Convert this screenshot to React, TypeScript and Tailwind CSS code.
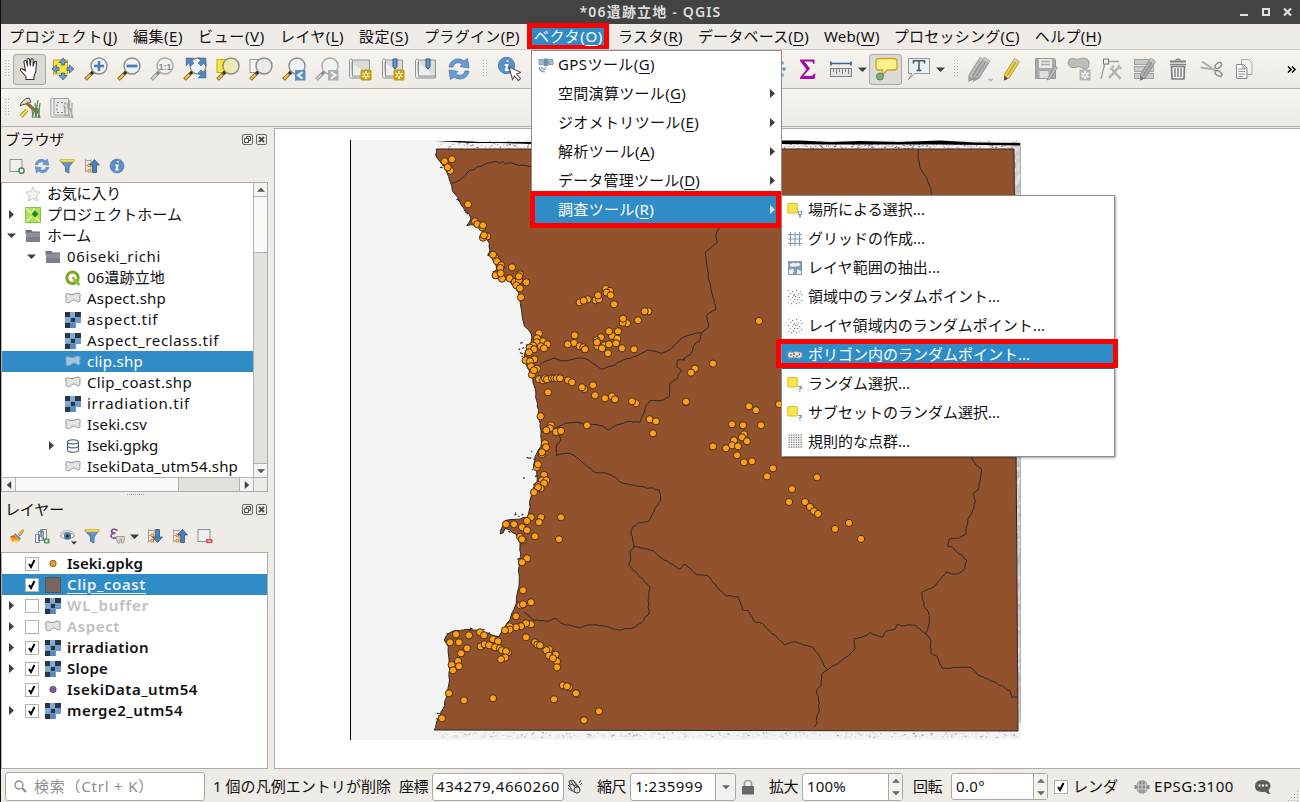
import React, { useLayoutEffect, useRef } from "react";

/* ---------- text ---------- */

/** Single line of text whose letter spacing is computed so that it fills `w` pixels. */
function Fit({ w, className = "", children }: { w: number; className?: string; children: React.ReactNode }) {
  const ref = useRef<HTMLSpanElement>(null);
  useLayoutEffect(() => {
    const el = ref.current;
    if (!el) return;
    el.style.letterSpacing = "0px";
    const natural = el.getBoundingClientRect().width;
    const count = (el.textContent || "").length || 1;
    el.style.letterSpacing = `${(w - natural) / count}px`;
  }, [w]);
  return (
    <span ref={ref} className={`inline-block shrink-0 whitespace-pre ${className}`}>
      {children}
    </span>
  );
}

function Mnemonic({ label, k }: { label: string; k: string }) {
  return (
    <>
      {label}(<span className="underline decoration-1 underline-offset-[3px]">{k}</span>)
    </>
  );
}

/* ---------- shared icon parts ---------- */

function Svg({ s = 24, vb = "0 0 24 24", children }: { s?: number; vb?: string; children: React.ReactNode }) {
  return (
    <svg width={s} height={s} viewBox={vb} fill="none" className="block shrink-0">
      {children}
    </svg>
  );
}

function Lens({ grey = false, fill = "#edf1f0" }: { grey?: boolean; fill?: string }) {
  return (
    <>
      <path d="M1.5 22.5 8.5 15.5" stroke={grey ? "#8d8d8d" : "#6b5a2a"} strokeWidth="3.6" />
      <path d="M2 22 6.5 17.5" stroke={grey ? "#d0d0d0" : "#f8c332"} strokeWidth="2.2" />
      <circle cx="8.8" cy="15.2" r="1.8" fill={grey ? "#888" : "#222"} />
      <circle cx="15" cy="9" r="8" fill={fill} fillOpacity=".88" stroke={grey ? "#a8a8a8" : "#858d8d"} strokeWidth="1.4" />
    </>
  );
}

const Hand = () => (
  <Svg>
    <path
      d="M8 22.500 8 19.5 3 14C1.6 12.4 3 11 4.6 12L7.5 14 6 5C5.8 3.2 8 3 8.4 4.6L9.6 9 9.2 2.8C9.2 1 11.4 1 11.6 2.7L12.3 8.8 12.9 2.7C13.2 1.2 15.2 1.4 15.2 3.1L15 9.3 16.4 5C17 3.6 18.8 4.2 18.5 5.8L17.7 15 16 19V22.500Z"
      fill="#fff"
      stroke="#333"
      strokeWidth="1.1"
      strokeLinejoin="round"
    />
  </Svg>
);
const Pan = () => (
  <Svg>
    <rect x="2.5" y="3" width="14" height="14" fill="#f8e23c" stroke="#c9a915" />
    <g fill="#6e9bd0" stroke="#36608f" strokeWidth=".8">
      <path d="M12 1 16 5.5H13.5V8H10.500V5.500H8Z" />
      <path d="M12 23 16 18.500H13.500V16H10.500V18.500H8Z" />
      <path d="M1 12 5.500 8V10.500H8V13.500H5.500V16Z" />
      <path d="M23 12 18.500 8V10.500H16V13.500H18.500V16Z" />
    </g>
  </Svg>
);
const ZoomIn = () => (
  <Svg>
    <Lens />
    <path d="M15 4V14M10 9H20" stroke="#4a7fb5" strokeWidth="2.600" />
  </Svg>
);
const ZoomOut = () => (
  <Svg>
    <Lens />
    <path d="M9.500 9H20.500" stroke="#4a7fb5" strokeWidth="2.800" />
  </Svg>
);
const ZoomOne = () => (
  <Svg>
    <Lens grey />
    <text x="15" y="12.500" textAnchor="middle" fontSize="9" fontWeight="700" fontFamily="Liberation Sans, sans-serif" fill="#8a8a8a">
      1:1
    </text>
  </Svg>
);
const ZoomFull = () => (
  <Svg>
    <Lens />
    <g fill="#5786bb" stroke="#36608f" strokeWidth=".5">
      <path d="M3 1H11L8.500 3.500 11 6 8 9 5.500 6.500 3 9Z" />
      <path d="M23 1V9L20.500 6.500 18 9 15 6 17.500 3.500 15 1Z" />
      <path d="M23 21V13L20.500 15.500 18 13 15 16 17.500 18.500 15 21Z" />
    </g>
  </Svg>
);
const ZoomSel = () => (
  <Svg>
    <rect x="1" y="2.500" width="13" height="13" fill="#f8e23c" stroke="#c9a915" />
    <Lens fill="#ece9b4" />
  </Svg>
);
const ZoomLayer = () => (
  <Svg>
    <rect x="1" y="2.500" width="13" height="13" fill="#f4f4f2" stroke="#9a9a9a" />
    <Lens fill="#e6e9e8" />
  </Svg>
);
const ZoomLast = () => (
  <Svg>
    <Lens />
    <rect x="13" y="13" width="10.500" height="10.500" fill="#5d8dc4" />
    <path d="M20.500 15 16 18.200 20.500 21.500" stroke="#fff" strokeWidth="1.800" />
  </Svg>
);
const ZoomNext = () => (
  <Svg>
    <Lens grey />
    <rect x="13" y="13" width="10.500" height="10.500" fill="#aeb0b0" />
    <path d="M16 15 20.500 18.200 16 21.500" stroke="#fff" strokeWidth="1.800" />
  </Svg>
);
function Scroll({ ribbon = false, badge = false }: { ribbon?: boolean; badge?: boolean }) {
  return (
    <Svg>
      <path d="M4 3H21.500V21H4Z" fill="#dadcdc" stroke="#909494" />
      <path d="M1.500 3.500C1.500 1.500 4.500 1.500 4.500 3.500V19H21M1.500 3.500V19.500C1.500 21 3 21.300 4.500 21" fill="#edeeee" stroke="#909494" />
      {ribbon && <path d="M12 2H16V9.500L14 12 12 9.500Z" fill="#6694cc" stroke="#2d5485" />}
      {badge && (
        <>
          <rect x="12.500" y="12.500" width="11" height="11" rx="1.500" fill="#c79f0d" />
          <path d="M18 14V22M14.500 16 21.500 20M21.500 16 14.500 20" stroke="#fff" strokeWidth="1.400" />
          <circle cx="18" cy="18" r="1.200" fill="#c79f0d" />
        </>
      )}
    </Svg>
  );
}
const Refresh = ({ s = 24 }: { s?: number }) => (
  <Svg s={s}>
    <g fill="#6b9bd1" stroke="#4478b0" strokeWidth=".8" strokeLinejoin="round">
      <path d="M2 10C3 3 11-.5 17 4L20.500 1.500 22 11 13 9.500 15.500 7C11 4.500 7 6 6 10Z" />
      <path d="M22 14C21 21 13 24.500 7 20L3.500 22.500 2 13 11 14.500 8.500 17C13 19.500 17 18 18 14Z" />
    </g>
  </Svg>
);
const Info = ({ s = 18 }: { s?: number }) => (
  <Svg s={s}>
    <circle cx="12" cy="12" r="10.500" fill="#5b8fc7" stroke="#4478b0" />
    <path d="M13.500 5.500H13.600M10.500 11H13L11 17.500H13.500" stroke="#fff" strokeWidth="2.600" strokeLinecap="round" />
  </Svg>
);
const Identify = () => (
  <Svg>
    <circle cx="9.500" cy="8.500" r="8.200" fill="#5b8fc7" stroke="#4e7fb5" />
    <path d="M10.500 4H10.600M8.500 8H10.300L9 13H10.800" stroke="#fff" strokeWidth="2" strokeLinecap="round" />
    <path d="M12 10 24 15.500 19.500 17 23.500 21.500 21.500 23.500 17.500 19 15.500 22.500Z" fill="#fff" stroke="#555" strokeWidth="1.100" />
  </Svg>
);
const Sigma = () => (
  <Svg>
    <path
      d="M4 2.500H18.500V7H17.500C17 5 16 4.500 14 4.500H8.500L14 11.500 7.500 19H14.500C16.500 19 17.500 18 18 16.500H19.500L18.500 22H4V20.500L10.500 12.500 4 4Z"
      fill="#a50ca5"
    />
  </Svg>
);
const Ruler = () => (
  <Svg s={24}>
    <path d="M1.500 6.500H22.500M2 4.500V8.500M22 4.500V8.500" stroke="#3c648c" strokeWidth="1.700" />
    <rect x="1.500" y="11.500" width="21" height="8" fill="#e2e2e2" stroke="#828282" />
    <path d="M4.500 12V15M7.500 12V17M10.500 12V15M13.500 12V17M16.500 12V15M19.500 12V17" stroke="#777" strokeWidth=".9" />
  </Svg>
);
const MapTip = () => (
  <Svg>
    <path d="M5 1.500H20Q23 1.500 23 4.500V10Q23 13 20 13H13L8.500 18V13H5Q2 13 2 10V4.500Q2 1.500 5 1.500Z" fill="#fcf08e" stroke="#c9a91c" strokeWidth="1.300" />
    <circle cx="6" cy="19.500" r="3.500" fill="#7fae7d" stroke="#55805a" />
  </Svg>
);
const TextNote = () => (
  <Svg>
    <path d="M1.500 1.500H22.500V16.500H8L1.500 22.500 5 16.500H1.500Z" fill="#e7f1f8" stroke="#8f9aa3" />
    <path d="M6.500 6.500V3.800H17.500V6.500M12 4V13M9.500 13.500H14.500" stroke="#555" strokeWidth="1.600" />
  </Svg>
);
function Pencil({ body = "#e8d253", dark = "#b39b25", tip = "#555" }) {
  return (
    <>
      <path d="M3.500 17.500 13.500 1.500 18.500 4.500 8.500 20.500 3.500 23Z" fill={body} stroke={dark} strokeWidth="1" />
      <path d="M6.200 18.700 16 3.200" stroke={dark} strokeWidth="1.200" />
      <path d="M12 3.500 13.500 1.500 18.500 4.500 17.200 6.500Z" fill="#c9c9c9" />
      <path d="M3.500 19.500 3.500 23 6.500 21.500Z" fill={tip} stroke={tip} />
    </>
  );
}
const Pencils = () => (
  <Svg s={26}>
    <g transform="translate(-1.500 0)"><Pencil body="#bcbcba" dark="#9d9d9b" tip="#999" /></g>
    <g transform="translate(2.500 0)"><Pencil body="#b4b4b2" dark="#959593" tip="#999" /></g>
    <path d="M19 21H25L22 24Z" fill="#bdbdbd" />
  </Svg>
);
const PencilY = () => (
  <Svg><Pencil /></Svg>
);
const Save = () => (
  <Svg>
    <path d="M1.500 1.500H20L21.500 3V21.500H1.500Z" fill="#a9a9a7" stroke="#999" />
    <rect x="5" y="2" width="13" height="9" fill="#eceae8" />
    <path d="M7 4.500H16M7 7.500H16" stroke="#a9a9a7" strokeWidth="1.300" />
    <rect x="5.500" y="14" width="9" height="7" fill="#deddda" />
    <path d="M13 23 21 9 23.500 10.500 16 22Z" fill="#c0c0be" stroke="#858583" strokeWidth=".7" />
  </Svg>
);
const AddPoly = () => (
  <Svg>
    <path d="M2 3C5-.5 8 3 12 2 16 .5 22 .5 22 6 22 12 19 13 16 11.500 14 10 12 9 8 10.500 3 12-.5 7 2 3Z" fill="#bdbdbb" stroke="#989896" />
    <rect x="12.500" y="12.500" width="11" height="11" fill="#b6b6b4" />
    <path d="M18 14V22M14.500 16 21.500 20M21.500 16 14.500 20" stroke="#fff" strokeWidth="1.500" />
    <circle cx="18" cy="18" r="1.200" fill="#b6b6b4" />
  </Svg>
);
const Vertex = () => (
  <Svg>
    <path d="M1 22 5 6M8 4.500H19" stroke="#a2a2a0" strokeWidth="1.300" />
    <rect x="3.500" y="2" width="5" height="5" fill="#eee" stroke="#777" />
    <path d="M11 11 20.500 22M19 10 9 21" stroke="#b2b2b0" strokeWidth="2.400" />
    <path d="M10 12.500 14 8.500M18 8 21.500 12" stroke="#b8b8b6" strokeWidth="2" />
  </Svg>
);
const MultiEdit = () => (
  <Svg>
    <g fill="#c9c9c7" stroke="#a2a2a0">
      <rect x="1.500" y="2.500" width="19" height="5" />
      <rect x="1.500" y="9.500" width="19" height="5" />
      <rect x="1.500" y="16.500" width="19" height="5" />
    </g>
    <g transform="translate(4 0)"><Pencil body="#b0b0ae" dark="#8c8c8a" tip="#777" /></g>
  </Svg>
);
const Trash = () => (
  <Svg>
    <path d="M4 4.500H20" stroke="#858583" strokeWidth="2.200" />
    <path d="M9.500 3.500Q12 .5 14.500 3.500M4 7.500H20" stroke="#858583" strokeWidth="1.300" />
    <path d="M5.500 9.500H18.500L18 22H6Z" fill="#f0efed" stroke="#7d7d7b" strokeWidth="1.700" />
    <path d="M9 11V20M12 11V20M15 11V20" stroke="#8a8a88" strokeWidth="1.500" />
  </Svg>
);
const Cut = () => (
  <Svg>
    <path d="M1.500 10.500 16 12.500M3 4.500 17 14" stroke="#b0b0ae" strokeWidth="2" />
    <ellipse cx="19.300" cy="8.500" rx="3.800" ry="2.300" transform="rotate(-42 19.300 8.500)" stroke="#8d8d8b" strokeWidth="1.500" />
    <ellipse cx="19.500" cy="16.500" rx="3.800" ry="2.300" transform="rotate(32 19.500 16.500)" stroke="#8d8d8b" strokeWidth="1.500" />
  </Svg>
);
const Copy = () => (
  <Svg>
    <path d="M9.500 2.500H16.500L20 6V17.500H9.500Z" fill="#f2f1ef" stroke="#a9a9a7" />
    <path d="M4.500 7.500H11.500L15 11V21.500H4.500Z" fill="#f7f6f4" stroke="#8a8a88" />
    <path d="M6.500 12H13M6.500 14.500H13M6.500 17H13M6.500 19.500H11M11 8V11H15" stroke="#8a8a88" strokeWidth=".9" />
  </Svg>
);
const Grass = () => (
  <Svg>
    <path d="M2 10Q4 3 11 2L13 6 8 8Q5 8 2 10Z" fill="#d8dcd8" stroke="#555" />
    <path d="M8.500 7 20 17" stroke="#a5651c" strokeWidth="3" />
    <path d="M3 20.500 9 14" stroke="#8d8a21" strokeWidth="4" />
    <path d="M3 20.500 9 14" stroke="#ece33c" strokeWidth="2.400" />
    <path d="M15 22 13.500 9M17 22 20 4M19 22 17 7M20.500 22 22 7M14 21 18 11M22 22 19.500 12" stroke="#4f8756" strokeWidth="1.200" />
  </Svg>
);
const GrassGrey = () => (
  <Svg>
    <path d="M4 2.500H18.500V19.500H4Z" fill="#e9e7e4" stroke="#a3a3a1" />
    <path d="M.8 3.500C.8 1.500 4 1.500 4 3.500V19H17M.8 3.500V19.500C.8 21 2 21 4 21H15" stroke="#a3a3a1" fill="#efedea" />
    <path d="M7 6.500H15V16.500H7Z" stroke="#777" strokeDasharray="2 2" />
    <path d="M16 22 14 9M18 22 20 4M20 22 17 7M21.500 22 22 7M23 22 20 12" stroke="#a3a3a1" strokeWidth="1.200" />
  </Svg>
);

/* small icons, 16px grid */
const S16 = ({ s = 16, children }: { s?: number; children: React.ReactNode }) => <Svg s={s} vb="0 0 16 16">{children}</Svg>;
const Star = () => (
  <S16>
    <path d="M8 .8 10.200 5.600 15.300 6.200 11.500 9.800 12.500 15 8 12.400 3.500 15 4.500 9.800 .7 6.200 5.800 5.600Z" fill="#f3f5ee" stroke="#bfc4b7" strokeWidth=".9" />
  </S16>
);
const Home = () => (
  <S16>
    <rect x=".5" y=".5" width="15" height="15" fill="#b3e253" stroke="#7fc243" />
    <path d="M1 1 15 15M1 15 7 9M9 1 7 6" stroke="#e3f5ae" strokeWidth="1.200" />
    <path d="M10 3.500 13.500 7 10 10.500 6.500 7Z" fill="#1c8a1c" />
  </S16>
);
const Folder = () => (
  <S16>
    <path d="M.5 2H6.500L7.500 3.500H15V6H.5Z" fill="#6a6f7a" />
    <path d="M1 4.500H15V14H1Z" fill="#8d919c" />
    <path d="M1 9H15V14H1Z" fill="#7b808c" />
  </S16>
);
const QLogo = () => (
  <S16>
    <circle cx="7.500" cy="7.800" r="5.700" stroke="#76a82a" strokeWidth="3" />
    <path d="M8.500 9 14.500 15" stroke="#8ec13a" strokeWidth="3" />
    <path d="M7 7H10L8 10Z" fill="#ee7913" />
  </S16>
);
const polyShape = "M1 3.500C2 1.500 4 3.500 7 3.500 10 3.500 12 1 14.500 2.500 16 3.500 14.500 5.500 14.800 7.500 15.500 10.500 14 11.500 12 10.500 10 8.500 8 8.500 6 10.500 4 12.500 .5 12 1 9.500 1.500 7 .3 5.500 1 3.500Z";
const Poly = () => (
  <S16>
    <path d={polyShape} fill="#e3e3e3" stroke="#8f8f8f" strokeWidth="1" />
  </S16>
);
const PolySel = () => (
  <S16>
    <path d={polyShape} fill="#a3c6dc" stroke="#6f9fc0" strokeWidth=".9" />
  </S16>
);
const Raster = () => (
  <svg width="16" height="16" viewBox="0 0 16 16" shapeRendering="crispEdges" className="block shrink-0">
    <rect width="16" height="16" fill="#729bc9" />
    <path d="M0 0H6V5H0ZM10 0H16V5H10ZM6 6H10V10H6ZM0 11H5V16H0Z" fill="#26374c" />
    <path d="M5 0H10V5H5ZM0 5H5V10H0Z" fill="#88aad1" />
    <path d="M5 11H10V16H5Z" fill="#5b86ba" />
    <path d="M11 11H16V16H11Z" fill="#fff" />
  </svg>
);
const Db = () => (
  <S16>
    <path d="M2.500 4C2.500 1 13.500 1 13.500 4V12C13.500 15 2.500 15 2.500 12ZM2.500 4C2.500 6.500 13.500 6.500 13.500 4M2.500 8C2.500 10.500 13.500 10.500 13.500 8" fill="#f6f8fa" stroke="#44617f" strokeWidth="1.100" />
  </S16>
);
const Dot = ({ c }: { c: string }) => (
  <S16>
    <circle cx="8" cy="7.500" r="3.200" fill={c} stroke="#555" strokeWidth=".8" />
  </S16>
);
const Swatch = () => <div className="size-4 shrink-0 border border-[#4b5b66] bg-[#78665d]" />;
const AddBox = () => (
  <S16>
    <rect x="1" y="1.500" width="12" height="12" fill="#f1efec" stroke="#8a9390" />
    <circle cx="12.500" cy="12.700" r="2.600" fill="#e6efe6" stroke="#4f8a5b" strokeWidth="1.500" />
  </S16>
);
const RemoveBox = () => (
  <S16>
    <rect x="1" y="1.500" width="12" height="12" fill="#f1efec" stroke="#8a9390" />
    <rect x="9" y="11" width="6.500" height="4" rx="1" fill="#e3403f" />
    <path d="M10.500 13H14" stroke="#fff" />
  </S16>
);
const Filter = () => (
  <S16>
    <path d="M1 2.500H15L10 9V15L6.500 13.500V9Z" fill="#6191c7" stroke="#4674a8" strokeWidth=".9" />
    <path d="M1 1.500H15V4H1.500Z" fill="#f5e04a" stroke="#b6a42d" strokeWidth=".6" />
  </S16>
);
function Tree({ up = false }: { up?: boolean }) {
  return (
    <S16>
      <path d="M1.500 1V14.500M1.500 2.500H7M1.500 7.500H4M1.500 13H4M7 1.500V14.500" stroke="#999" strokeWidth=".9" />
      <path d="M4 6H6.500V8.500H4ZM4 11.500H6.500V14H4Z" stroke="#f0870e" fill="#f9d6ab" />
      {up ? (
        <path d="M10.500 1.500 15.500 7H12.500V14.500H8.500V7H5.500Z" fill="#4c7fb8" stroke="#2f5b8c" strokeWidth=".8" />
      ) : (
        <path d="M10.500 14.500 15.500 9H12.500V1.500H8.500V9H5.500Z" fill="#4c7fb8" stroke="#2f5b8c" strokeWidth=".8" />
      )}
    </S16>
  );
}
const Brush = () => (
  <S16>
    <path d="M9 6.500 13.500 1.500 15 3 11 8Z" fill="#d7b65e" stroke="#a9852b" strokeWidth=".7" />
    <path d="M6 5 12 10.500 10.500 12 5 7Z" fill="#5989bf" />
    <path d="M1 8.500 5.500 6.500 11 12 9 14 6 13 3 14Z" fill="#f39b22" />
    <path d="M1 8.500 5 7.500 7 10.500Z" fill="#e2493d" />
    <path d="M4 12 9 12.500 9 14.500 5 14Z" fill="#f7df41" />
  </S16>
);
const AddGroup = () => (
  <S16>
    <path d="M1.500 6.500H5.500V14.500H1.500ZM4.500 3.500H9.500V12.500H4.500ZM8 1.500H12.500V11H8Z" fill="#f3f2ef" stroke="#68797f" strokeWidth=".9" />
    <path d="M7 1V9" stroke="#3f6d9a" strokeWidth="1.200" />
    <rect x="10" y="10.500" width="5.500" height="5" rx="1.300" fill="#4b9257" />
    <path d="M12.700 11.500V14.500M11.200 13H14.200" stroke="#fff" />
  </S16>
);
const Eye = () => (
  <Svg s={18} vb="0 0 18 18">
    <path d="M1 9Q8 1.500 16 9 8 15.500 1 9Z" fill="#eff2f4" stroke="#8c9296" />
    <circle cx="8.500" cy="9" r="3.600" fill="#547ba3" />
    <circle cx="8.500" cy="9" r="1.600" fill="#1e2c3b" />
    <path d="M1 6.500Q8 .5 16 6.500" stroke="#b4b8ba" />
    <path d="M12 14.500H18L15 17.500Z" fill="#333" />
  </Svg>
);
const Eps = () => (
  <S16>
    <path d="M8.500 2.500Q3-.5 2.500 3.200 2.800 5.500 6.500 5.300 1.500 5.500 2 8.500 3.500 11.500 9 9" stroke="#6f4a8c" strokeWidth="1.500" />
    <path d="M7.500 8.500H15.500V11L14.500 15H12.500V11H11V15H9L7.500 11Z" fill="#d6d6d6" stroke="#a0a0a0" />
  </S16>
);
const Gps = () => (
  <S16>
    <path d="M1 2.500H5V7.500H1ZM11 2.500H15V7.500H11Z" fill="#a7bdd0" stroke="#6a8ba9" strokeWidth=".8" />
    <rect x="5.500" y="1.500" width="5" height="7.500" rx="1" fill="#6d8fb0" />
    <path d="M8 10A3 3 0 0 1 4.500 12.500M1 10Q2 15 7 14.800M3 10Q4 12 7 12.500" stroke="#87a2ba" strokeWidth="1.300" />
  </S16>
);
const SelYellow = ({ pin = false }: { pin?: boolean }) => (
  <S16>
    <rect x=".8" y="1.500" width="9.500" height="9.500" rx=".6" fill="#fae54a" stroke="#d6b92c" />
    {pin ? (
      <>
        <circle cx="13" cy="11.200" r="1.700" stroke="#6b8da8" strokeWidth="1.200" />
        <path d="M13 12.900V15.900" stroke="#6b8da8" strokeWidth="1.300" />
      </>
    ) : (
      <path d="M11.400 10.500H14.200V12.300H12.900V14M12.900 14.900V16" stroke="#6b8da8" strokeWidth="1.200" strokeLinejoin="round" />
    )}
  </S16>
);
const Grid = () => (
  <S16>
    <path d="M3.500 1V15M8 1V15M12.500 1V15M1 3.500H15M1 8H15M1 12.500H15" stroke="#7d9bb2" strokeWidth="1.100" />
  </S16>
);
const Extent = () => (
  <S16>
    <rect x="1" y="1" width="14" height="14" fill="#7d9bb2" />
    <path d="M2.500 4Q6 1.500 9 3 12 1.500 13.500 4 13 7 10 6.500 6 7.500 3 6.500Z" fill="#eef0ee" stroke="#99a" strokeWidth=".5" />
    <path d="M2 14V10L6 8.500 7 11 5.500 14ZM10 9 14 11V14H10Z" fill="#eef0ee" />
  </S16>
);
const scatter = [[1, 1], [5, 2], [9, 1], [13, 2], [3, 4], [7, 5], [11, 4], [14, 5], [1, 7], [5, 8], [8, 7], [12, 8], [3, 10], [10, 10], [14, 11], [1, 13], [6, 12], [9, 14], [12, 13], [4, 14], [6, 6], [10, 6], [7, 10]];
const RandPts = () => (
  <S16>
    {scatter.map(([x, y], i) => (
      <rect key={i} x={x} y={y} width="1.200" height="1.200" fill={i % 3 ? "#758b7d" : "#9aa9bb"} />
    ))}
  </S16>
);
const RegPts = () => (
  <S16>
    {Array.from({ length: 36 }, (_, i) => (
      <rect key={i} x={1.500 + (i % 6) * 2.400} y={1.500 + Math.floor(i / 6) * 2.400} width="1.300" height="1.300" fill="#6d7a70" />
    ))}
  </S16>
);
const PolyPts = () => (
  <S16>
    <path d="M1 6Q3 4 5 5.500 9 4 12 5 16 5 15 9 14 12 11 11 7 10.500 4 11 0 11 1 6Z" fill="#e8e4da" stroke="#878b8c" strokeWidth=".8" />
    <path d="M4 7V9M7 6V8M10 8V10M12.500 6.500V8.500M6 9.500H7" stroke="#555" strokeWidth="1.200" />
  </S16>
);

/* ---------- little controls ---------- */

const Caret = ({ dir = "down", c = "#3e3e3e", s = 9 }: { dir?: "down" | "right" | "left" | "up"; c?: string; s?: number }) => {
  const d = { down: "M0 2.500H9L4.500 7Z", up: "M0 6.500H9L4.500 2Z", right: "M2 0 7 4.500 2 9Z", left: "M7 0 2 4.500 7 9Z" }[dir];
  return (
    <svg width={s} height={s} viewBox="0 0 9 9" className="block shrink-0">
      <path d={d} fill={c} />
    </svg>
  );
};

const Grip = () => (
  <svg width="5" height="18" viewBox="0 0 5 18" className="block shrink-0">
    {[0, 1, 2, 3, 4, 5].map((i) => (
      <path key={i} d={`M0 ${i * 3 + 0.500}H1M3 ${i * 3 + 0.500}H4`} stroke="#b3afaa" />
    ))}
  </svg>
);

const Check = ({ on = true }: { on?: boolean }) => (
  <div className="flex size-[14px] shrink-0 items-center justify-center border border-[#b5b2ae] bg-white">
    {on && (
      <svg width="10" height="10" viewBox="0 0 10 10">
        <path d="M2 5 4 8 7.500 1" fill="none" stroke="#000" strokeWidth="2" />
      </svg>
    )}
  </div>
);

const Cell = ({ on = false, children }: { on?: boolean; children?: React.ReactNode }) => (
  <div className={`flex h-[31px] w-[33px] shrink-0 items-center justify-center ${on ? "rounded-[3px] border border-[#aba7a3] bg-[#dcd9d6]" : ""}`}>{children}</div>
);

const DockTitle = ({ w, children }: { w: number; children: React.ReactNode }) => (
  <div className="flex h-[22px] items-center pr-[7px] pl-[4px]">
    <Fit w={w}>{children}</Fit>
    <div className="ml-auto flex gap-[3px]">
      {["M2.500 4.500H6.500V8.500H2.500ZM4.500 4V2.500H8.500V6.500H7", "M3 3 8 8M8 3 3 8"].map((d, i) => (
        <svg key={d} width="11" height="11" viewBox="0 0 11 11">
          <rect x=".5" y=".5" width="10" height="10" rx="1.500" fill="none" stroke="#6c6966" />
          <path d={d} fill="none" stroke="#4f4c4a" strokeWidth={i ? 1.800 : 1} />
        </svg>
      ))}
    </div>
  </div>
);

/* ---------- map ---------- */

type P = [number, number];
const rnd = (n: number) => {
  const v = Math.sin(n * 127.1 + 311.7) * 43758.5453;
  return v - Math.floor(v);
};

/** Reads "x,y x,y ..." in third-of-a-pixel units from a sheet origin. */
const sheet = (ox: number, oy: number, s: string): P[] =>
  s.trim().split(/\s+/).map((p) => {
    const [x, y] = p.split(",").map(Number);
    return [ox + x / 3, oy + y / 3];
  });
const A = (s: string) => sheet(340, 130, s);
const B = (s: string) => sheet(420, 430, s);
const C = (s: string) => sheet(680, 220, s);

/** Adds small wiggles between the survey points. */
const rough = (pts: P[], amp = 1.300): string => {
  const out: string[] = [];
  pts.forEach(([x, y], i) => {
    out.push(`${x.toFixed(1)} ${y.toFixed(1)}`);
    const n = pts[i + 1];
    if (!n) return;
    const k = Math.floor(Math.hypot(n[0] - x, n[1] - y) / 3);
    for (let j = 1; j < k; j++) {
      const t = j / k;
      out.push(`${(x + (n[0] - x) * t + (rnd(x + j * 3.100) - 0.500) * amp).toFixed(1)} ${(y + (n[1] - y) * t + (rnd(y + j * 7.300) - 0.500) * amp).toFixed(1)}`);
    }
  });
  return "M" + out.join("L");
};

const coast: P[] = [
  ...A("289,57 287,75 300,95 318,115 326,140 332,158 338,185 352,200 362,222 372,236 382,246 393,265 380,287 400,285 425,300 437,325 448,340 450,360 445,375 460,390 468,405 470,418 458,440 480,448 500,450 515,462 530,480 540,500 541,520 546,555 553,588 566,600 574,612 574,635 560,655 553,680 550,695 560,705 575,740 585,775 592,830 598,860 603,900 604,930"),
  ...B("362,50 345,80 340,110 350,125 352,150 340,175 333,200 328,240 322,262 290,268 255,272 248,288 242,300 241,312 250,308 255,295 270,300 288,312 300,340 302,370 296,400 298,440 294,480 285,530 270,570 255,590 237,620 215,614 200,608 180,600 130,600 100,603 80,615 73,630 85,650 88,700 87,760 80,800 70,835 55,865 42,900"),
];

const borders: P[][] = [
  A("332,158 350,155 362,148 372,140 383,126 392,119 402,120 412,110 430,106 448,98 468,94 480,100 488,94 496,102 512,98 525,102 545,106 572,110"),
  [...A("598,708 608,698 620,692 640,684 665,692 700,688 725,684 745,690 785,718 815,708 850,690 890,678 925,660 965,670 980,664 1010,640"), ...C("0,358 20,348 40,342 65,338")],
  [
    ...C("65,338 60,362 40,380 30,405 10,418"),
    ...A("1035,690 1012,690 1010,710 1025,722 1012,745 990,760 988,800 960,812 930,812 915,835 900,878 860,875 830,885 808,900 780,886 720,878 690,878 665,886 640,898 655,905 663,930"),
    ...B("422,30 410,45 408,77 440,70 460,75 480,90 520,125 560,130 590,145 610,160 650,168 690,174 718,180 722,210 705,235 685,275 655,278 638,290 633,305 642,350 630,365 632,390 626,405 640,420 668,445 690,472 684,510 688,545 665,578 635,595 595,600 550,588 510,584 485,592 430,582 405,564 380,574 340,570 322,555 312,545"),
  ],
  [...B("642,350 700,362 725,385 750,400 780,418 795,402 830,435 862,436 900,480 920,498 955,500 968,540 985,542 1000,572 1030,582"), ...C("270,1235 315,1276 345,1265 400,1282 443,1350")],
  C("443,1350 425,1362 424,1395 410,1410 415,1440 418,1470 410,1490 412,1510 402,1522"),
  C("443,1350 505,1308 525,1288 523,1256 555,1248 570,1237 608,1252 618,1233 645,1228 652,1213 665,1218 705,1215 737,1242 752,1262 752,1300 770,1308 787,1345 870,1342 900,1368 950,1390 990,1412 995,1432 1010,1430"),
  C("737,1242 748,1210 745,1175 732,1160 725,1118 765,1098 800,1055 815,1062 835,1062 855,1045 860,1020 830,995 818,982 803,978 808,957 835,955 858,943 863,900 875,880 886,845 880,820 895,810 905,748 888,735 875,712 870,700"),
  C("118,22 107,48 112,68 75,98 82,150 92,200 102,240 108,268 80,285 86,320 65,340"),
  [[918, 149], [918, 158], [920, 168], [927, 178], [932, 195]],
];

const sites: P[] = [
  ...A("336,87 314,93 331,121 323,111 384,222 405,273 412,282 427,291 429,285 442,318 429,322 432,315 466,382 459,373 471,393 484,405 481,413 467,435 486,445 482,429 516,411 509,444 540,432 524,455 537,450 529,465 537,438 559,456 540,474 543,501"),
  ...A("719,516 743,507 731,511 767,510 777,507 774,495 797,476 810,482 800,487 812,495 822,522 925,543 914,543 894,570 861,579 848,577 849,565 704,615 702,638 683,642 719,648 730,651 735,657 816,617 807,603 834,603 832,625 783,621 770,630 772,647 771,636 793,645 807,642 828,639 804,669 786,654 846,654 882,657"),
  ...A("597,609 591,624 609,633 622,642 590,636 579,646 603,648 612,654 569,652 582,657 567,666 583,687 557,690 570,693 573,708 591,715 576,733 582,720 597,747 609,750 615,744 621,747 636,744 643,744 650,744 660,744 684,750 696,756 733,776 726,771 759,765 765,795 795,804 816,798 825,807 888,819 876,813 624,786 602,858 633,885 621,900 630,894 660,903 648,906 741,885 929,867 948,873 939,909 1038,816"),
  ...B("379,0 408,5 423,2 375,39 378,51 366,72 366,66 351,111 354,102 372,134 366,150 379,150 355,165 372,159 362,174 354,171 342,186 333,261 363,261 357,276 321,272 282,282 258,282 306,291 321,300 300,319 309,330 306,327 345,318 423,261 417,327 321,384 306,396 309,480 333,516 301,525 309,522 288,558 333,582 318,579 303,588 288,591 269,588 269,598 255,600 318,621"),
  ...B("108,612 147,615 180,606 192,615 219,627 234,633 90,636 117,636 141,654 123,669 114,692 95,704 117,708 99,720 87,789 132,810 219,804 66,864 182,648 194,642 207,645 225,651 240,654 246,660 264,666 258,663 256,682 243,687 345,636 352,643 360,645 387,657 379,660 387,676 407,673 411,693 399,684 411,711 429,765 447,771 441,768 471,791 468,789 402,807 537,843 492,870 699,9"),
  ...C("237,302 99,430 45,445 33,457 18,544 207,558 228,570 297,552 156,612 189,615 243,615 192,642 186,651 162,660 201,663 156,675 138,684 174,678 99,678 171,705 192,726 216,723 279,744 261,768 411,771 336,806 327,845 375,845 390,860 402,873 414,881 465,926 507,908 543,956"),
];

const islets: P[] = A("300,112 306,103 345,192 349,207 354,210 371,240 375,246 379,252 442,374 458,426 455,436 541,640 547,656 540,668 545,680 558,645 536,660").concat(
  B("333,65 320,82 330,85 340,88 335,118 309,144 345,140 340,165 292,388 295,394 283,256 285,250 295,258 305,256 265,303 275,307 80,612 150,594 190,600 50,850 55,858 48,866 145,600 206,608")
);

function MapCanvas() {
  const land = `${rough(coast)}L1018 731 1014 149Z`;
  return (
    <svg width="1025" height="639" viewBox="275 129 1025 639" className="block">
      <rect x="350" y="140" width="671" height="600" fill="#f4f4f4" />
      <path d="M350.500 140V740" stroke="#000" />
      <rect x="1014" y="143" width="7" height="580" fill="#cdcdcd" />
      <path d="M1020.500 143V720" stroke="#b0b0b0" />
      {Array.from({ length: 260 }, (_, i) => (
        <rect key={i} x={1014 + rnd(i) * 5} y={143 + rnd(i + 900) * 580} width="1.500" height={1 + rnd(i + 50) * 5} fill={rnd(i + 70) > 0.450 ? "#e9e9e9" : "#b4b4b4"} />
      ))}
      {Array.from({ length: 800 }, (_, i) => (
        <rect key={i} x={436 + Math.pow(rnd(i + 3), 0.700) * 582} y={141 + rnd(i + 411) * 7} width={0.600 + rnd(i + 8) * 1.600} height="1" fill={rnd(i + 71) > 0.700 ? "#666" : "#c4c4c4"} />
      ))}
      {Array.from({ length: 360 }, (_, i) => (
        <rect key={i} x={433 + rnd(i + 13) * 585} y={732 + rnd(i + 511) * 5} width={0.800 + rnd(i + 18) * 1.600} height="1" fill={rnd(i + 72) > 0.850 ? "#999" : "#dadada"} />
      ))}
      <path d="M436 141H460L480 142H532V144L500 143 470 143Z" fill="#000" />
      <path d="M780 140.500H800L830 142 860 141 900 142 940 140.500 975 142.500 1020 143V145.500L985 145 940 144.500 880 144.500 830 144.500 780 144Z" fill="#000" />
      {islets.map(([x, y], i) => (
        <path key={i} d={`M${x} ${y}l${1 + rnd(i) * 2} ${(rnd(i + 5) - 0.500) * 3}`} stroke="#333" strokeWidth="1.300" />
      ))}
      <path d={land} fill="#91522d" stroke="#2c2722" strokeWidth="1" />
      {borders.map((b, i) => (
        <path key={i} d={rough(b, 1.500)} fill="none" stroke="#2e2a27" strokeWidth="1" />
      ))}
      {sites.map(([x, y], i) => (
        <circle key={i} cx={x} cy={y + 0.300} r="3.600" fill="#ff9e17" stroke="#44301a" strokeWidth="1" />
      ))}
    </svg>
  );
}

/* ---------- data ---------- */

const menus: [string, string, number, string][] = [
  ["プロジェクト", "J", 109, "ml-[8px]"],
  ["編集", "E", 50, "ml-[15px]"],
  ["ビュー", "V", 67, "ml-[15px]"],
  ["レイヤ", "L", 64, "ml-[15px]"],
  ["設定", "S", 50, "ml-[15px]"],
  ["プラグイン", "P", 96, "ml-[15px]"],
  ["ベクタ", "O", 69, "ml-[14px] text-white"],
  ["ラスタ", "R", 65, "ml-[15px]"],
  ["データベース", "D", 111, "ml-[15px]"],
  ["Web", "W", 56, "ml-[15px]"],
  ["プロセッシング", "C", 126, "ml-[14px]"],
  ["ヘルプ", "H", 67, "ml-[15px]"],
];

type Row = { pad: string; arrow?: "down" | "right"; icon: React.ReactNode; t: string; w: number; sel?: boolean };
const files: Row[] = [
  { pad: "pl-[5px]", icon: <Star />, t: "お気に入り", w: 74 },
  { pad: "pl-[5px]", arrow: "right", icon: <Home />, t: "プロジェクトホーム", w: 135 },
  { pad: "pl-[5px]", arrow: "down", icon: <Folder />, t: "ホーム", w: 44 },
  { pad: "pl-[25px]", arrow: "down", icon: <Folder />, t: "06iseki_richi", w: 94 },
  { pad: "pl-[45px]", icon: <QLogo />, t: "06遺跡立地", w: 78 },
  { pad: "pl-[45px]", icon: <Poly />, t: "Aspect.shp", w: 79 },
  { pad: "pl-[45px]", icon: <Raster />, t: "aspect.tif", w: 71 },
  { pad: "pl-[45px]", icon: <Raster />, t: "Aspect_reclass.tif", w: 132 },
  { pad: "pl-[45px]", icon: <PolySel />, t: "clip.shp", w: 56, sel: true },
  { pad: "pl-[45px]", icon: <Poly />, t: "Clip_coast.shp", w: 105 },
  { pad: "pl-[45px]", icon: <Raster />, t: "irradiation.tif", w: 103 },
  { pad: "pl-[45px]", icon: <Poly />, t: "Iseki.csv", w: 60 },
  { pad: "pl-[45px]", arrow: "right", icon: <Db />, t: "Iseki.gpkg", w: 71 },
  { pad: "pl-[45px]", icon: <Poly />, t: "IsekiData_utm54.shp", w: 151 },
];

const layers: { arrow?: boolean; on: boolean; icon: React.ReactNode; t: string; w: number; sel?: boolean }[] = [
  { on: true, icon: <Dot c="#f59a14" />, t: "Iseki.gpkg", w: 76 },
  { on: true, icon: <Swatch />, t: "Clip_coast", w: 79, sel: true },
  { arrow: true, on: false, icon: <Raster />, t: "WL_buffer", w: 82 },
  { arrow: true, on: false, icon: <Poly />, t: "Aspect", w: 53 },
  { arrow: true, on: true, icon: <Raster />, t: "irradiation", w: 82 },
  { arrow: true, on: true, icon: <Raster />, t: "Slope", w: 41 },
  { on: true, icon: <Dot c="#8656a0" />, t: "IsekiData_utm54", w: 131 },
  { arrow: true, on: true, icon: <Raster />, t: "merge2_utm54", w: 116 },
];

const vectorMenu: [string, string, number][] = [
  ["GPSツール", "G", 97],
  ["空間演算ツール", "G", 128],
  ["ジオメトリツール", "E", 141],
  ["解析ツール", "A", 97],
  ["データ管理ツール", "D", 142],
  ["調査ツール", "R", 96],
];

const research: [React.ReactNode, string, number][] = [
  [<SelYellow pin />, "場所による選択...", 117],
  [<Grid />, "グリッドの作成...", 117],
  [<Extent />, "レイヤ範囲の抽出...", 132],
  [<RandPts />, "領域中のランダムポイント...", 192],
  [<RandPts />, "レイヤ領域内のランダムポイント...", 237],
  [<PolyPts />, "ポリゴン内のランダムポイント...", 222],
  [<SelYellow />, "ランダム選択...", 102],
  [<SelYellow />, "サブセットのランダム選択...", 192],
  [<RegPts />, "規則的な点群...", 102],
];

/* ---------- panels ---------- */

function Browser() {
  return (
    <section className="h-[364px]">
      <DockTitle w={59}>ブラウザ</DockTitle>
      <div className="flex h-[32px] items-center gap-[9px] pl-[8px]">
        <AddBox />
        <Refresh s={16} />
        <Filter />
        <Tree up />
        <Info s={16} />
      </div>
      <div className="h-[310px] w-[267px] border border-[#aeaaa6] bg-white">
        <div className="flex h-[294px]">
          <div className="w-[251px] overflow-hidden">
            {files.map((f) => (
              <div key={f.t} className={`flex h-[21px] items-center ${f.pad} ${f.sel ? "bg-[#308cc6] text-white" : ""}`}>
                <div className="flex w-[18px] justify-start">{f.arrow && <Caret dir={f.arrow} />}</div>
                {f.icon}
                <Fit w={f.w} className="ml-[6px]">{f.t}</Fit>
              </div>
            ))}
          </div>
          <div className="flex w-[14px] flex-col border-l border-[#b5b1ad] bg-[#e3e1de]">
            <div className="flex h-[14px] items-center justify-center border-b border-[#b5b1ad] bg-[#f6f4f2]"><Caret dir="up" s={8} c="#555" /></div>
            <div className="h-[56px] border-b border-[#b5b1ad] bg-[#f9f8f6]" />
            <div className="mt-auto flex h-[14px] items-center justify-center border-t border-[#b5b1ad] bg-[#f6f4f2]"><Caret s={8} c="#555" /></div>
          </div>
        </div>
        <div className="flex h-[14px] border-t border-[#b5b1ad] bg-[#e3e1de]">
          <div className="flex w-[14px] items-center justify-center border-r border-[#b5b1ad] bg-[#f6f4f2]"><Caret dir="left" s={8} c="#444" /></div>
          <div className="w-[163px] border-r border-[#b5b1ad] bg-[#f9f8f6]" />
          <div className="ml-auto flex w-[14px] items-center justify-center border-l border-[#b5b1ad] bg-[#f6f4f2]"><Caret dir="right" s={8} c="#444" /></div>
          <div className="w-[14px] border-l border-[#b5b1ad] bg-[#efebe7]" />
        </div>
      </div>
    </section>
  );
}

function Layers() {
  return (
    <section className="pt-[6px]">
      <div className="h-[2px] w-[17px] translate-x-[126px] -translate-y-[4px] border-t border-dotted border-[#a8a4a0]" />
      <div className="-mt-[2px]">
        <DockTitle w={59}>レイヤー</DockTitle>
      </div>
      <div className="flex h-[32px] items-center gap-[9px] pl-[8px]">
        <Brush />
        <AddGroup />
        <Eye />
        <div className="-ml-[2px]"><Filter /></div>
        <Eps />
        <div className="-ml-[4px]"><Caret /></div>
        <div className="-ml-[1px]"><Tree /></div>
        <Tree up />
        <RemoveBox />
      </div>
      <div className="h-[217px] w-[267px] border border-[#aeaaa6] bg-white font-semibold">
        {layers.map((l) => (
          <div key={l.t} className={`flex h-[21px] items-center pl-[5px] ${l.sel ? "bg-[#308cc6] text-[#e4f0f8]" : l.on ? "" : "text-[#bebebe]"}`}>
            <div className="w-[18px]">{l.arrow && <Caret dir="right" />}</div>
            <Check on={l.on} />
            <div className="ml-[6px]">{l.icon}</div>
            <Fit w={l.w} className={`ml-[6px] ${l.sel ? "underline decoration-1 underline-offset-[3px]" : ""}`}>{l.t}</Fit>
          </div>
        ))}
      </div>
    </section>
  );
}

const field = "flex shrink-0 items-center rounded-[3px] border border-[#aba7a3] bg-white";

const Spin = ({ className, children }: { className: string; children: React.ReactNode }) => (
  <div className={`${field} ${className}`}>
    {children}
    <div className="ml-auto flex h-full w-[14px] flex-col items-center justify-center gap-[4px] border-l border-[#aba7a3] bg-[#f4f2ef]">
      <Caret dir="up" c="#666" s={8} />
      <Caret c="#666" s={8} />
    </div>
  </div>
);

function StatusBar() {
  return (
    <footer className="flex h-[33px] items-center pt-[2px] pl-[4px]">
      <div className={`${field} h-[29px] w-[200px] pl-[8px]`}>
        <svg width="13" height="13" viewBox="0 0 13 13" fill="none" stroke="#8a8a8a" strokeWidth="1.300">
          <circle cx="5" cy="5" r="4" />
          <path d="M8 8 12 12" strokeWidth="2" />
        </svg>
        <Fit w={120} className="ml-[7px] text-[#8c8c8c]">検索（Ctrl + K）</Fit>
      </div>
      <Fit w={178} className="ml-[8px]">1 個の凡例エントリが削除</Fit>
      <Fit w={29} className="ml-[8px]">座標</Fit>
      <div className={`${field} ml-[4px] h-[28px] w-[132px] pl-[3px]`}>
        <Fit w={124}>434279,4660260</Fit>
      </div>
      <svg width="16" height="16" viewBox="0 0 16 16" fill="none" stroke="#444" className="ml-[3px] shrink-0">
        <path d="M2 2 6 1 12 8Q14 13 10 14 6 14 3 8ZM4 2 9 10M6 1 11 9M3 5 12 8M1 6 4 9M1 9 5 12M12 4 14 1M13 6 15 4" />
        <circle cx="10" cy="11" r="3" fill="#ddd" />
      </svg>
      <Fit w={29} className="ml-[14px]">縮尺</Fit>
      <div className={`${field} ml-[4px] h-[28px] w-[106px] pl-[4px]`}>
        <Fit w={68}>1:235999</Fit>
        <div className="ml-auto flex h-full w-[20px] items-center justify-center rounded-r-[3px] border-l border-[#aba7a3] bg-[#f4f2ef]"><Caret c="#666" s={8} /></div>
      </div>
      <svg width="12" height="16" viewBox="0 0 12 16" fill="none" className="ml-[6px] shrink-0">
        <path d="M2.500 8V4.500Q2.500 1.500 6 1.500 9.500 1.500 9.500 4.500V8" stroke="#9a9a9a" strokeWidth="1.600" />
        <rect y="7" width="12" height="8.500" rx="1" fill="#666" />
      </svg>
      <Fit w={29} className="ml-[15px]">拡大</Fit>
      <Spin className="ml-[4px] h-[28px] w-[101px] pl-[4px]"><Fit w={39}>100%</Fit></Spin>
      <Fit w={29} className="ml-[10px]">回転</Fit>
      <Spin className="ml-[9px] h-[27px] w-[97px] pl-[4px]"><Fit w={29}>0.0°</Fit></Spin>
      <div className="ml-[6px]"><Check /></div>
      <Fit w={45} className="ml-[5px]">レンダ</Fit>
      <svg width="16" height="16" viewBox="0 0 16 16" fill="#8a8a8a" className="ml-[16px] shrink-0">
        <path d="M8 1 12 2.500 13.500 6H15.500V10H13.500L12 13.500 8 15 4 13.500 2.500 10H.5V6H2.500L4 2.500Z" />
        <path d="M2 6H14M2 10H14M8 1V15M5 2Q3.500 8 5 14M11 2Q12.500 8 11 14" stroke="#ddd" strokeWidth=".8" fill="none" />
      </svg>
      <Fit w={80} className="ml-[4px]">EPSG:3100</Fit>
      <svg width="18" height="16" viewBox="0 0 18 16" className="ml-[20px] shrink-0">
        <path d="M8.500 1Q16.500 1.500 16.500 7 16.500 9.500 14.500 11 15 13.500 16.500 15 13 15 11 12.700 1 14 1 7 1 1.500 8.500 1Z" fill="#5c5c5c" />
        <path d="M4.500 6.500H6.500M8 6.500H10M11.500 6.500H13.500" stroke="#fff" strokeWidth="1.800" />
      </svg>
      <svg width="11" height="11" viewBox="0 0 11 11" className="mr-px ml-auto self-end">
        {[[9, 0], [6, 3], [9, 3], [3, 6], [6, 6], [9, 6], [0, 9], [3, 9], [6, 9], [9, 9]].map(([x, y]) => (
          <rect key={`${x}-${y}`} x={x} y={y} width="1" height="1" fill="#9f9b97" />
        ))}
      </svg>
    </footer>
  );
}

const toolbar = "flex items-center border-b border-[#b4b0ac] bg-linear-to-b from-[#f7f4f0] to-[#eeebe6]";

export default function App() {
  return (
    <div className="relative flex h-[802px] w-[1300px] flex-col overflow-hidden border-l border-[#0b0f14] bg-[#efebe7] font-['Noto_Sans','Noto_Sans_CJK_JP',sans-serif] text-[15px] leading-[21px] text-[#111]">
      <header className="relative flex h-[24px] shrink-0 items-center justify-center bg-[#434343] pb-[2px] text-[14px] font-semibold text-[#dedede]">
        <Fit w={142}>*06遺跡立地 - QGIS</Fit>
        <svg width="54" height="10" viewBox="0 0 54 10" fill="none" stroke="#dedede" className="absolute top-[7px] right-[7px]">
          <path d="M1 8H9" strokeWidth="2" />
          <rect x="24" y="2" width="6" height="6" strokeWidth="2" />
          <path d="M45 1.500 52 8.500M52 1.500 45 8.500" strokeWidth="2.200" />
        </svg>
      </header>

      <nav className="relative flex h-[26px] shrink-0 items-center border-b border-[#cfcbc7]">
        <div className="absolute top-[-1px] left-[526px] h-[26px] w-[82px] border-[5px] border-b-4 border-[#fd0000] bg-[#308cc6]" />
        {menus.map(([label, k, w, cls]) => (
          <Fit key={label} w={w} className={`relative ${cls}`}>
            <Mnemonic label={label} k={k} />
          </Fit>
        ))}
      </nav>

      <div className={`${toolbar} h-[39px] shrink-0`}>
        <div className="flex w-[12px] justify-center pl-px"><Grip /></div>
        <Cell on><Hand /></Cell>
        <Cell><Pan /></Cell>
        <Cell><ZoomIn /></Cell>
        <Cell><ZoomOut /></Cell>
        <Cell><ZoomOne /></Cell>
        <Cell><ZoomFull /></Cell>
        <Cell><ZoomSel /></Cell>
        <Cell><ZoomLayer /></Cell>
        <Cell><ZoomLast /></Cell>
        <Cell><ZoomNext /></Cell>
        <Cell><Scroll badge /></Cell>
        <Cell><Scroll badge ribbon /></Cell>
        <Cell><Scroll ribbon /></Cell>
        <Cell><Refresh /></Cell>
        <div className="flex w-[17px] justify-center pl-[3px]"><Grip /></div>
        <Cell><Identify /></Cell>
        <div className="flex w-[266px] justify-end pr-[5px]">
          <svg width="6" height="18" viewBox="0 0 6 18" fill="#5b9bd3">
            <circle cx="2" cy="3" r="1.800" />
            <circle cx="4" cy="9" r="1.800" />
            <circle cx="2" cy="15" r="1.800" />
          </svg>
        </div>
        <Cell><Sigma /></Cell>
        <Cell><Ruler /></Cell>
        <div className="flex w-[12px] justify-center pr-px"><Caret /></div>
        <Cell on><MapTip /></Cell>
        <Cell><TextNote /></Cell>
        <div className="flex w-[10px] justify-center"><Caret /></div>
        <div className="flex w-[18px] justify-center pl-[4px]"><Grip /></div>
        <Cell><Pencils /></Cell>
        <Cell><PencilY /></Cell>
        <Cell><Save /></Cell>
        <Cell><AddPoly /></Cell>
        <Cell><Vertex /></Cell>
        <Cell><MultiEdit /></Cell>
        <Cell><Trash /></Cell>
        <Cell><Cut /></Cell>
        <Cell><Copy /></Cell>
        <svg width="9" height="7" viewBox="0 0 9 7" fill="none" stroke="#000" strokeWidth="1.500" className="mr-[4px] ml-auto">
          <path d="M1 .5 4 3.500 1 6.500M5 .5 8 3.500 5 6.500" />
        </svg>
      </div>

      <div className={`${toolbar} h-[38px] shrink-0`}>
        <div className="flex w-[12px] justify-center pl-px"><Grip /></div>
        <Cell><Grass /></Cell>
        <div className="-ml-[1px]"><Cell><GrassGrey /></Cell></div>
      </div>

      <main className="flex h-[642px] shrink-0 pt-px">
        <aside className="w-[273px] shrink-0">
          <Browser />
          <Layers />
        </aside>
        <div className="h-[641px] w-[1026px] shrink-0 overflow-hidden border-y border-l border-[#aeaaa6] bg-white">
          <MapCanvas />
        </div>
      </main>

      <StatusBar />

      <div className="absolute top-[50px] left-[530px] w-[251px] border border-[#8f8c89] bg-white">
        {vectorMenu.map(([label, k, w], i) => (
          <div key={label} className={`flex h-[29px] items-center pr-[4px] pb-[2px] pl-[6px] ${i === 5 ? "bg-[#308cc6] text-white" : ""}`}>
            <div className="w-[20px]">{i === 0 && <Gps />}</div>
            <Fit w={w}><Mnemonic label={label} k={k} /></Fit>
            <div className="ml-auto pb-px">{i > 0 && <Caret dir="right" c={i === 5 ? "#cfe5f3" : "#3e3e3e"} />}</div>
          </div>
        ))}
      </div>

      <div className="absolute top-[195px] left-[780px] w-[334px] border border-[#8f8c89] bg-white shadow-[1px_1px_2px_rgba(0,0,0,.35)]">
        {research.map(([icon, label, w], i) => (
          <div
            key={label}
            className={`flex h-[29px] items-center gap-[5px] pl-[5px] last:h-[28px] ${i === 5 ? "border-b border-white bg-[#308cc6] bg-clip-padding pb-px text-white shadow-[inset_0_-1px_#1f6a9c]" : "pb-[2px]"}`}
          >
            {icon}
            <Fit w={w}>{label}</Fit>
          </div>
        ))}
      </div>

      <div className="absolute top-[191px] left-[529px] h-[37px] w-[251px] border-[5px] border-[#fd0000]" />
      <div className="absolute top-[339px] left-[775px] h-[29px] w-[342px] border-[5px] border-[#fd0000]" />
    </div>
  );
}
